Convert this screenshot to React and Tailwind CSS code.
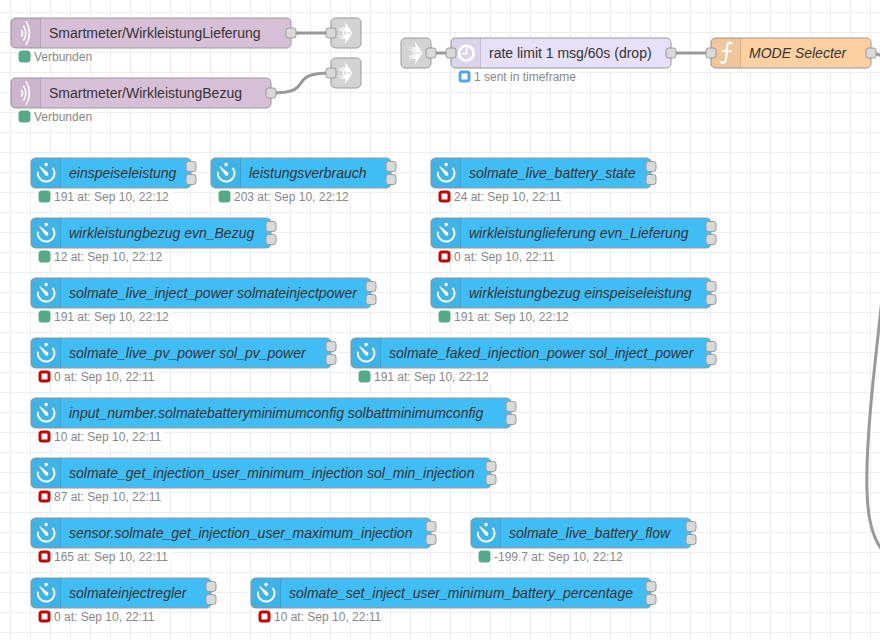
import React from "react";

const KINDS = {
  mqtt: { fill: "bg-[#d8bfd8]", Icon: WaveIcon },
  link: { fill: "bg-[#d3d3d3]", Icon: LinkIcon },
  delay: { fill: "bg-[#e6e0f8]", Icon: ClockIcon },
  func: { fill: "bg-[#fdd0a2]", Icon: FunctionIcon },
  timer: { fill: "bg-[#41bdf5]", Icon: TimerIcon },
};

const NODES = [
  { kind: "mqtt", x: 11, y: 18, w: 280, label: "Smartmeter/WirkleistungLieferung", status: "Verbunden", dot: "green", out: 1 },
  { kind: "mqtt", x: 11, y: 78, w: 260, label: "Smartmeter/WirkleistungBezug", status: "Verbunden", dot: "green", out: 1 },
  { kind: "link", x: 331, y: 18, w: 30, input: true, out: 0 },
  { kind: "link", x: 331, y: 58, w: 30, input: true, out: 0 },
  { kind: "link", x: 401, y: 38, w: 30, out: 1 },
  { kind: "delay", x: 451, y: 38, w: 220, label: "rate limit 1 msg/60s (drop)", status: "1 sent in timeframe", dot: "blue", input: true, out: 1 },
  { kind: "func", x: 711, y: 38, w: 160, label: "MODE Selecter", input: true, out: 1 },
  { kind: "timer", x: 31, y: 158, w: 160, label: "einspeiseleistung", status: "191 at: Sep 10, 22:12", dot: "green", out: 2 },
  { kind: "timer", x: 211, y: 158, w: 180, label: "leistungsverbrauch", status: "203 at: Sep 10, 22:12", dot: "green", out: 2 },
  { kind: "timer", x: 431, y: 158, w: 220, label: "solmate_live_battery_state", status: "24 at: Sep 10, 22:11", dot: "red", out: 2 },
  { kind: "timer", x: 31, y: 218, w: 240, label: "wirkleistungbezug evn_Bezug", status: "12 at: Sep 10, 22:12", dot: "green", out: 2 },
  { kind: "timer", x: 431, y: 218, w: 280, label: "wirkleistunglieferung evn_Lieferung", status: "0 at: Sep 10, 22:11", dot: "red", out: 2 },
  { kind: "timer", x: 31, y: 278, w: 340, label: "solmate_live_inject_power solmateinjectpower", status: "191 at: Sep 10, 22:12", dot: "green", out: 2 },
  { kind: "timer", x: 431, y: 278, w: 280, label: "wirkleistungbezug einspeiseleistung", status: "191 at: Sep 10, 22:12", dot: "green", out: 2 },
  { kind: "timer", x: 31, y: 338, w: 300, label: "solmate_live_pv_power sol_pv_power", status: "0 at: Sep 10, 22:11", dot: "red", out: 2 },
  { kind: "timer", x: 351, y: 338, w: 360, label: "solmate_faked_injection_power sol_inject_power", status: "191 at: Sep 10, 22:12", dot: "green", out: 2 },
  { kind: "timer", x: 31, y: 398, w: 480, label: "input_number.solmatebatteryminimumconfig solbattminimumconfig", status: "10 at: Sep 10, 22:11", dot: "red", out: 2 },
  { kind: "timer", x: 31, y: 458, w: 460, label: "solmate_get_injection_user_minimum_injection sol_min_injection", status: "87 at: Sep 10, 22:11", dot: "red", out: 2 },
  { kind: "timer", x: 31, y: 518, w: 400, label: "sensor.solmate_get_injection_user_maximum_injection", status: "165 at: Sep 10, 22:11", dot: "red", out: 2 },
  { kind: "timer", x: 471, y: 518, w: 220, label: "solmate_live_battery_flow", status: "-199.7 at: Sep 10, 22:12", dot: "green", out: 2 },
  { kind: "timer", x: 31, y: 578, w: 180, label: "solmateinjectregler", status: "0 at: Sep 10, 22:11", dot: "red", out: 2 },
  { kind: "timer", x: 251, y: 578, w: 400, label: "solmate_set_inject_user_minimum_battery_percentage", status: "10 at: Sep 10, 22:11", dot: "red", out: 2 },
];

const WIRES = [
  "M291 33H331",
  "M271 93C318.4 93 283.6 73 331 73",
  "M431 53H451",
  "M671 53H711",
  "M871 53C875 53 878 54 884 57",
  "M883 289C877.5 345 867 420 866.8 480C866.8 510 870 534 882 550",
];

const DOTS = {
  green: "border-[#5a8] bg-[#5a8]",
  red: "border-[#c00] bg-white",
  blue: "border-[#53a3f3] bg-white",
};

function WaveIcon() {
  return (
    <svg className="block size-[30px]" viewBox="0 0 30 30" fill="none" stroke="#fff">
      <path d="M10.3 12Q12.6 15.2 10.3 18.6" strokeWidth="1.8" />
      <path d="M12.4 7.8Q17.2 15.2 12.4 22.6" strokeWidth="1.6" />
      <path d="M15 3.4Q22 15.2 15 26.8" strokeWidth="1.6" />
    </svg>
  );
}

function LinkIcon() {
  return (
    <svg className="block size-[30px]" viewBox="0 0 30 30">
      <path d="M13.8 3.6L21.3 15L13.8 26.4L14.8 20.8H8V9.4H14.8Z" fill="#fff" />
      <circle cx="8.6" cy="15" r="5.4" fill="#d3d3d3" />
      <path d="M8 11.6H9.2A3.4 3.4 0 0 1 9.2 18.4H8" fill="none" stroke="#fff" strokeWidth="1.4" />
      <path d="M13 15H20" stroke="#d3d3d3" strokeWidth="1" />
    </svg>
  );
}

function ClockIcon() {
  return (
    <svg className="block size-[30px]" viewBox="0 0 30 30">
      <circle cx="15.3" cy="15.2" r="7.3" fill="none" stroke="#fff" strokeWidth="2.6" />
      <path d="M15.5 10.5V15.8H11" fill="none" stroke="#fff" strokeWidth="1.6" />
    </svg>
  );
}

function FunctionIcon() {
  return (
    <svg className="block size-[30px]" viewBox="0 0 30 30" fill="none" stroke="#fff" strokeWidth="2.3">
      <path d="M21.2 6.4C20.5 4 17 3.7 16.3 7C15.6 10.5 15.9 17 15 21.3C14.2 25.4 11 25.9 9.6 23.4" />
      <path d="M10.7 13.2H20.8" strokeWidth="2" />
    </svg>
  );
}

function TimerIcon() {
  return (
    <svg className="block size-[30px]" viewBox="0 0 30 30">
      <path d="M21.5 9.8A8.3 8.3 0 1 1 7 13.6" fill="none" stroke="#fff" strokeWidth="2" />
      <circle cx="15.1" cy="6.6" r="1.8" fill="#fff" />
      <path d="M9.1 8.9L16.4 15A1.1 1.1 0 0 1 14.7 16.7Z" fill="#fff" stroke="#fff" strokeWidth="1.3" strokeLinejoin="round" />
    </svg>
  );
}

function Port({ x, y }) {
  return (
    <div
      className="absolute left-0 top-0 size-[11px] rounded-[3px] border border-[#999] bg-[#d9d9d9]"
      style={{ transform: `translate(${x - 5.5}px, ${y - 5.5}px)` }}
    />
  );
}

function Status({ text, dot }) {
  return (
    <div className="ml-[7px] mt-0.5 flex h-[13px] w-fit items-start bg-white pr-[3px]">
      <div className={`size-3 shrink-0 translate-x-[0.5px] translate-y-[0.5px] rounded-[3.5px] border-[3px] ${DOTS[dot]}`} />
      <span className="pl-[4px] text-[12px] leading-[15px] text-[#888]">{text}</span>
    </div>
  );
}

function FlowNode({ node }) {
  const { fill, Icon } = KINDS[node.kind];
  const italic = node.kind === "timer" || node.kind === "func";
  return (
    <div className="absolute" style={{ left: node.x, top: node.y, width: node.w }}>
      <div className="relative flex h-[30px] items-center">
        <div className={`absolute left-0 top-0 h-[31px] w-[calc(100%+1px)] translate-x-[-0.5px] translate-y-[-0.5px] rounded-[5px] border border-[#999] ${fill}`} />
        <div className={`relative size-[30px] shrink-0 ${node.label ? "rounded-l-[4px] border-r border-black/10 bg-black/5" : ""}`}>
          <Icon />
        </div>
        {node.label && (
          <span className={`relative pl-2 text-[14px] leading-[30px] text-[#333] ${italic ? "italic" : ""}`}>{node.label}</span>
        )}
        {node.input && <Port x={0} y={15} />}
        {node.out === 1 && <Port x={node.w} y={15} />}
        {node.out === 2 && (
          <>
            <Port x={node.w} y={8.5} />
            <Port x={node.w} y={21.5} />
          </>
        )}
      </div>
      {node.status && <Status text={node.status} dot={node.dot} />}
    </div>
  );
}

export default function App() {
  return (
    <main className="relative h-[640px] w-[880px] overflow-hidden whitespace-nowrap bg-white bg-[linear-gradient(to_right,#eee_1px,transparent_1px),linear-gradient(to_bottom,#eee_1px,transparent_1px)] bg-[length:20px_20px] bg-[position:10px_12px] font-['Liberation_Sans',Arial,sans-serif]">
      <svg className="absolute inset-0" width="880" height="640" fill="none" stroke="#999" strokeWidth="3">
        {WIRES.map((d) => (
          <path key={d} d={d} />
        ))}
      </svg>
      {NODES.map((n) => (
        <FlowNode key={`${n.x}-${n.y}`} node={n} />
      ))}
    </main>
  );
}
